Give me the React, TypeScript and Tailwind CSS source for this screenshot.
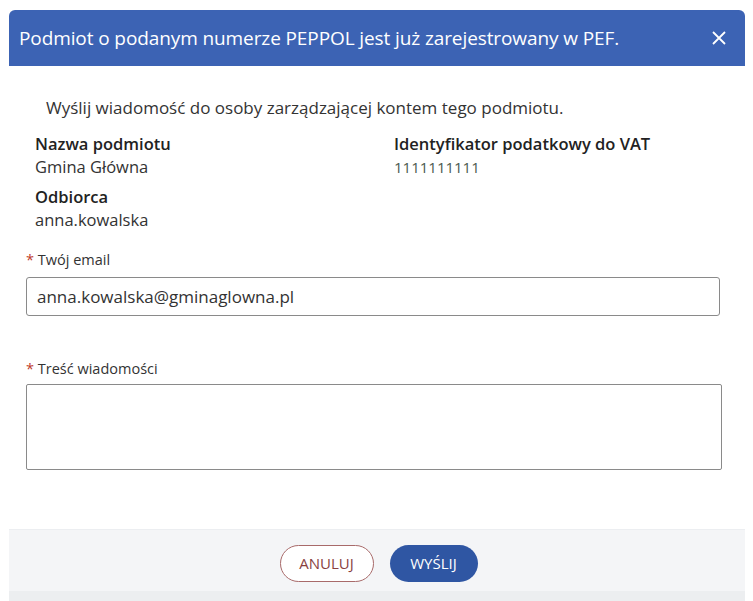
export default function App() {
  return (
    <div className="min-h-screen bg-white pl-[9px] pr-[8px] pt-[10px] font-['Open_Sans',sans-serif]">
      <div className="flex flex-col bg-white">
        <header className="flex h-[56px] items-center justify-between rounded-t-[6px] bg-[#3c63b4] pl-[10px] pr-[14px] text-white">
          <h1 className="text-[19px] tracking-[-0.1px]">
            Podmiot o podanym numerze PEPPOL jest już zarejestrowany w PEF.
          </h1>
          <button className="flex h-6 w-6 items-center justify-center" aria-label="Zamknij">
            <svg width="16" height="16" viewBox="0 0 16 16" fill="none" stroke="white" strokeWidth="1.8">
              <path d="M2 2 L14 14 M14 2 L2 14" />
            </svg>
          </button>
        </header>

        <div className="flex flex-col px-[17px] pt-[29px] pb-[59px] text-[#333]">
          <p className="pl-[20px] text-[17px]">
            Wyślij wiadomość do osoby zarządzającej kontem tego podmiotu.
          </p>
          <div className="mt-[11px] grid grid-cols-[359px_1fr] pl-[9px] text-[16.5px] leading-[23px]">
            <div>
              <div className="font-semibold text-[#222]">Nazwa podmiotu</div>
              <div>Gmina Główna</div>
              <div className="mt-[7px] font-semibold text-[#222]">Odbiorca</div>
              <div>anna.kowalska</div>
            </div>
            <div>
              <div className="font-semibold text-[#222]">Identyfikator podatkowy do VAT</div>
              <div className="mt-[1px] text-[15px] text-[#4b5a4f]">1111111111</div>
            </div>
          </div>

          <label className="mt-[18px] text-[14.5px] text-[#333]">
            <span className="text-[#c0392b]">*</span> Twój email
          </label>
          <div className="mt-[7px] flex h-[39px] w-[694px] items-center rounded-[3px] border border-[#8a8a8a] px-[10px] text-[17px] text-[#333]">
            anna.kowalska@gminaglowna.pl
          </div>

          <label className="mt-[42px] text-[14.5px] text-[#333]">
            <span className="text-[#c0392b]">*</span> Treść wiadomości
          </label>
          <div className="mt-[4px] h-[86px] w-[696px] rounded-[2px] border border-[#8a8a8a]" />
        </div>

        <footer className="flex h-[62px] items-start justify-center gap-[16px] border-t border-[#eceef1] bg-[#f4f5f7] pt-[15px]">
          <button className="ml-[3px] h-[37px] w-[94px] rounded-full border border-[#a86a6a] bg-white text-[15px] text-[#8a3f3f]">
            ANULUJ
          </button>
          <button className="h-[37px] w-[88px] rounded-full bg-[#2f56a3] text-[15px] text-white">
            WYŚLIJ
          </button>
        </footer>
        <div className="h-[10px] bg-[#eceef0]" />
      </div>
    </div>
  );
}
